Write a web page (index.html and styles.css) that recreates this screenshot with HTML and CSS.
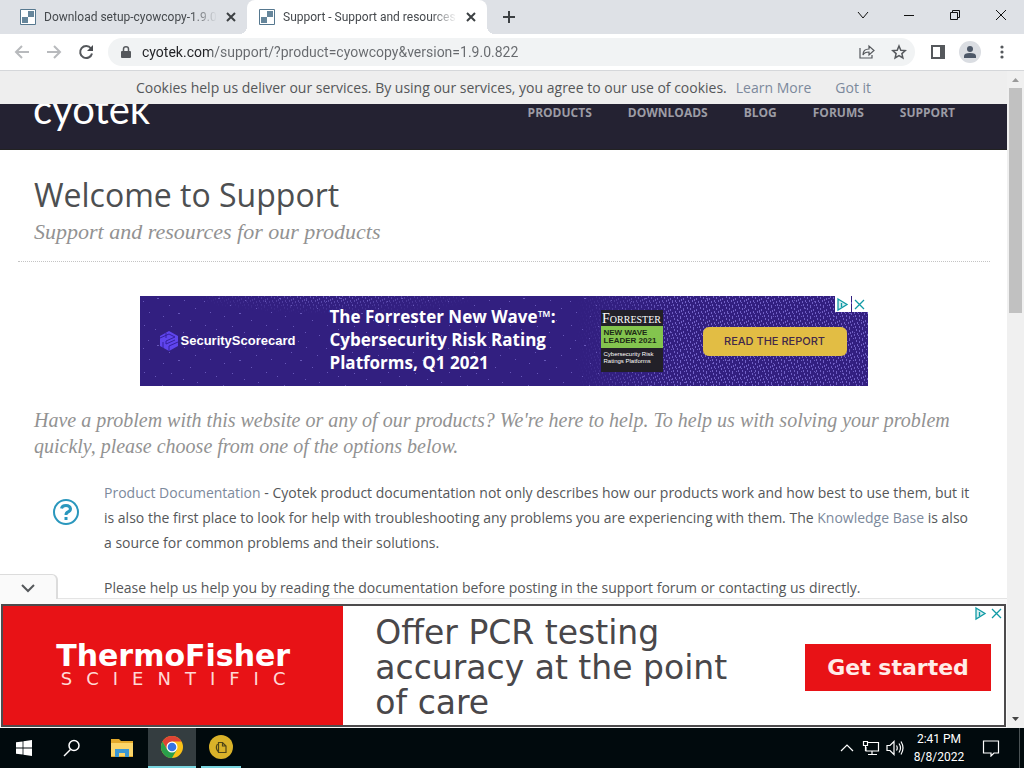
FILE: index.html
```html
<!DOCTYPE html>
<html lang="en">
<head>
<meta charset="utf-8">
<title>Support - Support and resources</title>
<link rel="stylesheet" href="styles.css">
</head>
<body>
<header class="tabstrip">
  <div class="tab">
    <svg class="favicon" viewBox="0 0 16 16"><path fill="#fff" stroke="#56788f" d="M.5.5h15v15H.5z"/><path fill="#66869b" d="M8 2h6v6H8zM2 8h6v6H2z"/></svg>
    <span class="tab-title">Download setup-cyowcopy-1.9.0</span>
    <button class="tab-close" aria-label="Close tab"><svg width="10" height="10" viewBox="0 0 10 10"><path d="M1 1l8 8M9 1L1 9"/></svg></button>
  </div>
  <div class="tab active">
    <svg class="favicon" viewBox="0 0 16 16"><path fill="#fff" stroke="#56788f" d="M.5.5h15v15H.5z"/><path fill="#66869b" d="M8 2h6v6H8zM2 8h6v6H2z"/></svg>
    <span class="tab-title">Support - Support and resources</span>
    <button class="tab-close" aria-label="Close tab"><svg width="10" height="10" viewBox="0 0 10 10"><path d="M1 1l8 8M9 1L1 9"/></svg></button>
  </div>
  <button class="new-tab" aria-label="New tab"><svg width="12" height="12" viewBox="0 0 12 12"><path d="M6 0v12M0 6h12"/></svg></button>
  <div class="window-controls">
    <button aria-label="Search tabs"><svg width="12" height="12" viewBox="0 0 12 12"><path d="M1 3l5 6 5-6"/></svg></button>
    <button aria-label="Minimize"><svg width="12" height="12" viewBox="0 0 12 12"><path d="M1 6.500h10"/></svg></button>
    <button aria-label="Restore"><svg width="12" height="12" viewBox="0 0 12 12"><path d="M1.500 3.500h7v7h-7zM3.500 3.500v-2h7v7h-2"/></svg></button>
    <button aria-label="Close"><svg width="12" height="12" viewBox="0 0 12 12"><path d="M1 1l10 10M11 1L1 11"/></svg></button>
  </div>
</header>

<div class="toolbar">
  <button class="tool faint" aria-label="Back"><svg width="16" height="16" viewBox="0 0 16 16"><path d="M15 8H2M8 2L2 8l6 6"/></svg></button>
  <button class="tool faint" aria-label="Forward"><svg width="16" height="16" viewBox="0 0 16 16"><path d="M1 8h13M8 2l6 6-6 6"/></svg></button>
  <button class="tool" aria-label="Reload"><svg width="16" height="16" viewBox="0 0 16 16"><path stroke-width="2" d="M13 4.500A6 6 0 1 0 14 9.500"/><path stroke="none" fill="#4a4d51" d="M15 1v6H9z"/></svg></button>
  <div class="omnibox">
    <svg class="lock" width="10" height="12" viewBox="0 0 10 12"><path fill="#55585c" d="M1 5h8q1 0 1 1v5q0 1-1 1H1q-1 0-1-1V6q0-1 1-1z"/><path fill="none" stroke="#55585c" stroke-width="1.500" d="M2.500 5V3a2.500 2.200 0 0 1 5 0v2"/></svg>
    <input class="url" type="text" aria-label="Address" value="cyotek.com/support/?product=cyowcopy&amp;version=1.9.0.822">
    <button class="tool" aria-label="Share"><svg width="16" height="16" viewBox="0 0 16 16"><path stroke-width="1.200" d="M1 4v10h12v-3M4 11c0-4 2-6 6-6V2l5 4.500-5 4.500V8C7 8 5 9 4 11z"/></svg></button>
    <button class="tool" aria-label="Bookmark"><svg width="16" height="16" viewBox="0 0 16 16"><path stroke-width="1.500" d="M8 2l1.800 4.200 4.500.4-3.400 3 1 4.400L8 11.700 4.100 14l1-4.400-3.400-3 4.500-.4z"/></svg></button>
  </div>
  <button class="tool" aria-label="Side panel"><svg width="16" height="16" viewBox="0 0 16 16"><path fill="#fff" stroke-width="2" d="M2 2h12v12H2z"/><path stroke="none" fill="#55585c" d="M10 2h4v12h-4z"/></svg></button>
  <button class="tool" aria-label="Profile"><svg width="22" height="22" viewBox="0 0 22 22"><circle cx="11" cy="11" r="11" fill="#dadde2" stroke="none"/><circle cx="11" cy="8" r="3" fill="#4c5767" stroke="none"/><path fill="#4c5767" stroke="none" d="M5 17v-2q0-3 6-3t6 3v2z"/></svg></button>
  <button class="tool" aria-label="Menu"><svg width="4" height="14" viewBox="0 0 4 14"><g fill="#55585c" stroke="none"><circle cx="2" cy="2" r="1.600"/><circle cx="2" cy="7" r="1.600"/><circle cx="2" cy="12" r="1.600"/></g></svg></button>
</div>

<div class="viewport">
  <div class="page">
    <div class="cookies">
      <span>Cookies help us deliver our services. By using our services, you agree to our use of cookies.</span>
      <a class="learn" href="#">Learn More</a>
      <a class="gotit" href="#">Got it</a>
    </div>
    <div class="site-header">
      <a class="logo" href="#">cyotek</a>
      <nav class="site-nav">
        <a href="#">Products</a><a href="#">Downloads</a><a href="#">Blog</a><a href="#">Forums</a><a href="#">Support</a>
      </nav>
    </div>
    <main class="content">
      <div class="heading">
        <h1>Welcome to Support</h1>
        <p class="tagline">Support and resources for our products</p>
      </div>
      <div class="banner">
        <svg class="speckle" width="100%" height="100%" aria-hidden="true">
          <defs>
            <pattern id="sparse" width="61" height="47" patternUnits="userSpaceOnUse"><path fill="#6757b8" d="M3 5h1v1H3zM17 2h2v1h-2zM29 9h1v1h-1zM44 4h1v1h-1zM55 12h1v1h-1zM9 16h1v1H9zM23 20h1v1h-1zM38 17h2v1h-2zM50 24h1v1h-1zM4 29h1v1H4zM15 33h1v1h-1zM31 30h1v1h-1zM43 36h1v1h-1zM57 39h1v1h-1zM22 42h1v1h-1zM8 44h1v1H8zM36 45h1v1h-1z"/></pattern>
            <pattern id="dense" width="13" height="11" patternUnits="userSpaceOnUse"><path fill="#7767cc" d="M1 0h1v2H1zM4 1h1v2H4zM7 0h1v1H7zM10 2h1v2h-1zM2 4h1v2H2zM6 4h1v2H6zM12 5h1v2h-1zM9 6h1v2H9zM0 8h1v2H0zM4 8h1v2H4zM7 9h1v2H7zM11 9h1v1h-1zM3 6h1v1H3zM8 3h1v2H8z"/></pattern>
            <linearGradient id="fade-right"><stop offset=".6" stop-color="#000"/><stop offset=".74" stop-color="#eee"/><stop offset="1" stop-color="#ddd"/></linearGradient>
            <radialGradient id="glow" cx=".27" cy="0" r=".2"><stop offset="0" stop-color="#ccc"/><stop offset="1" stop-color="#000"/></radialGradient>
            <mask id="right-mask"><rect width="100%" height="100%" fill="url(#fade-right)"/></mask>
            <mask id="glow-mask"><rect width="100%" height="100%" fill="url(#glow)"/></mask>
          </defs>
          <rect width="100%" height="100%" fill="url(#sparse)"/>
          <rect width="100%" height="100%" fill="url(#dense)" mask="url(#right-mask)"/>
          <rect width="100%" height="100%" fill="url(#dense)" mask="url(#glow-mask)"/>
        </svg>
        <div class="scorecard">
          <svg width="18" height="20" viewBox="0 0 18 20"><path fill="#5f45ee" d="M9 0l9 5v10l-9 5-9-5V5z"/><path fill="none" stroke="#3520a0" d="M0 7l9-4 6 3-9 4v3l9-4M3 17v-6M9 20v-5l9-4M6 2v5"/></svg>
          <span>SecurityScorecard</span>
        </div>
        <p class="banner-text">The Forrester New Wave™: Cybersecurity Risk Rating Platforms, Q1 2021</p>
        <div class="badge">
          <span class="badge-top">F<small>ORRESTER</small></span>
          <span class="badge-mid">NEW WAVE<br>LEADER 2021</span>
          <span class="badge-low">Cybersecurity Risk<br>Ratings Platforms</span>
        </div>
        <button class="report">READ THE REPORT</button>
        <div class="adchoices">
          <button aria-label="Ad choices"><svg width="15" height="15" viewBox="0 0 15 15"><path fill="#d5eff0" d="M3 2l9 5.500L3 13z"/><path d="M6.500 6v4"/></svg></button>
          <button aria-label="Close ad"><svg width="15" height="15" viewBox="0 0 15 15"><path d="M3 3l9 9M12 3l-9 9"/></svg></button>
        </div>
      </div>
      <p class="lead">Have a problem with this website or any of our products? We're here to help. To help us with solving your problem quickly, please choose from one of the options below.</p>
      <section class="option">
        <svg class="option-icon" width="26" height="26" viewBox="0 0 26 26"><circle cx="13" cy="13" r="12" fill="#fff" stroke="#2a97bd" stroke-width="2"/><path fill="none" stroke="#2a97bd" stroke-width="3" d="M8.500 9.500Q9 6.500 13 6.500t4.500 3.300Q17.500 12 15 13q-2 .8-2 3"/><path fill="#2a97bd" d="M11.500 18h3v3h-3z"/></svg>
        <div>
          <p><a href="#">Product Documentation</a> - Cyotek product documentation not only describes how our products work and how best to use them, but it is also the first place to look for help with troubleshooting any problems you are experiencing with them. The <a href="#">Knowledge Base</a> is also a source for common problems and their solutions.</p>
          <p>Please help us help you by reading the documentation before posting in the support forum or contacting us directly.</p>
        </div>
      </section>
    </main>
    <aside class="anchor">
      <button class="collapse" aria-label="Collapse ad"><svg width="16" height="10" viewBox="0 0 16 10"><path fill="none" stroke="#55585b" stroke-width="2" d="M2 1l6 6 6-6"/></svg></button>
      <div class="thermo">
        <div class="thermo-logo"><strong>ThermoFisher</strong><span>SCIENTIFIC</span></div>
        <p>Offer PCR testing accuracy at the point of care</p>
        <button class="started">Get started</button>
        <div class="adchoices plain">
          <button aria-label="Ad choices"><svg width="15" height="15" viewBox="0 0 15 15"><path fill="#d5eff0" d="M3 2l9 5.500L3 13z"/><path d="M6.500 6v4"/></svg></button>
          <button aria-label="Close ad"><svg width="15" height="15" viewBox="0 0 15 15"><path d="M3 3l9 9M12 3l-9 9"/></svg></button>
        </div>
      </div>
    </aside>
  </div>
  <div class="scrollbar">
    <svg width="7" height="4" viewBox="0 0 7 4"><path fill="#9a9a9a" d="M0 4l3.500-4L7 4z"/></svg>
    <div class="thumb"></div>
    <svg width="7" height="4" viewBox="0 0 7 4"><path fill="#444" d="M0 0l3.500 4L7 0z"/></svg>
  </div>
</div>

<footer class="taskbar">
  <button class="task" aria-label="Start"><svg width="16" height="16" viewBox="0 0 16 16"><path fill="#fff" d="M0 2.300L6.600 1.400v6.200H0zM7.400 1.300L16 0v7.600H7.400zM0 8.400h6.600v6.200L0 13.700zM7.400 8.400H16V16l-8.600-1.300z"/></svg></button>
  <button class="task" aria-label="Search"><svg width="18" height="18" viewBox="0 0 18 18"><circle cx="11" cy="6.500" r="5" fill="none" stroke="#fff" stroke-width="1.500"/><path stroke="#fff" stroke-width="1.500" d="M7.500 10.500L1 17"/></svg></button>
  <button class="task folder" aria-label="File Explorer"><svg width="22" height="20" viewBox="0 0 22 20"><path fill="#e3a92b" d="M0 1h8l2 2h12v16H0z"/><path fill="#fbd569" d="M0 5h22v13H0z"/><path fill="#3b97d3" d="M4 11h14v8h-4v-4H8v4H4z"/></svg></button>
  <button class="task current" aria-label="Chrome"><svg width="24" height="24" viewBox="0 0 24 24"><circle cx="12" cy="12" r="11" fill="#fbc117"/><path fill="#de4335" d="M2.470 6.500A11 11 0 0 1 21.530 6.500H12L7.240 14.750z"/><path fill="#2a9f4b" d="M2.470 6.500A11 11 0 0 0 12 23l4.760-8.250H7.240z"/><circle cx="12" cy="12" r="5.500" fill="#fff"/><circle cx="12" cy="12" r="4.300" fill="#3573e3"/></svg></button>
  <button class="task running" aria-label="Cyotek CopyTools"><svg width="24" height="24" viewBox="0 0 24 24"><circle cx="12" cy="12" r="12" fill="#d9b229"/><path fill="none" stroke="#4e4519" stroke-width="1.200" d="M9.500 7.500h4l3.500 3.500v6.500H9.500zM13.500 7.500V11H17M8.500 9c-2 3-1 6 1 8"/></svg></button>
  <div class="tray">
    <button aria-label="Hidden icons"><svg width="14" height="8" viewBox="0 0 14 8"><path d="M1 7l6-6 6 6"/></svg></button>
    <button aria-label="Network"><svg width="18" height="16" viewBox="0 0 18 16"><path d="M5 2.500h11.500v8.500H4V7M10 11v3.500M6 14.500h9M1.500 1.500h4v4h-4zM3.500 5.500V11"/></svg></button>
    <button aria-label="Volume"><svg width="18" height="16" viewBox="0 0 18 16"><path d="M1 5.500h3l4-4v13l-4-4H1zM10.500 5.500q1.500 2.500 0 5M13 3.500q3 4.500 0 9M15 1.500q4 6.500 0 13"/></svg></button>
    <div class="clock"><time>2:41 PM</time><time>8/8/2022</time></div>
    <button class="notice" aria-label="Notifications"><svg width="18" height="18" viewBox="0 0 18 18"><path d="M1.500 2h15v12H12l-3 3v-3H1.500z"/></svg></button>
  </div>
</footer>
</body>
</html>
```
FILE: styles.css
```css
* { box-sizing: border-box; }
body {
  margin: 0;
  height: 100vh;
  display: flex;
  flex-direction: column;
  overflow: hidden;
  font: 14px/25px "Open Sans", sans-serif;
  color: #555759;
  background: #fff;
}
p, h1 { margin: 0; }
a { color: #7c899c; text-decoration: none; }
button { border: 0; padding: 0; background: none; font: inherit; color: inherit; display: flex; align-items: center; justify-content: center; }
svg { display: block; flex: none; }

.tabstrip { flex: none; height: 34px; display: flex; background: #dee1e6; font: 12px/16px Roboto, sans-serif; }
.tab { width: 240px; display: flex; align-items: center; padding: 0 8px 0 12px; color: #45494d; }
.tab:first-child { margin-left: 8px; width: 239px; }
.tab.active { background: #fff; border-radius: 8px 8px 0 0; position: relative; }
.tab.active::before, .tab.active::after { content: ""; position: absolute; bottom: 0; width: 8px; height: 8px; }
.tab.active::before { right: 100%; background: radial-gradient(circle at 0 0, #dee1e6 8px, #fff 8px); }
.tab.active::after { left: 100%; background: radial-gradient(circle at 100% 0, #dee1e6 8px, #fff 8px); }
.favicon { width: 16px; height: 16px; margin-right: 8px; }
.tab-title { flex: 1; overflow: hidden; white-space: nowrap; -webkit-mask-image: linear-gradient(90deg, #000 85%, transparent); mask-image: linear-gradient(90deg, #000 85%, transparent); }
.tab-close { width: 16px; height: 16px; margin-left: 6px; }
.tab-close svg, .new-tab svg { fill: none; stroke: #3c4043; stroke-width: 2; }
.new-tab { width: 28px; margin-left: 8px; }
.window-controls { margin-left: auto; display: flex; height: 29px; }
.window-controls button { width: 46px; }
.window-controls svg { fill: none; stroke: #111; }

.toolbar { flex: none; height: 37px; display: flex; align-items: center; padding: 0 6px; border-bottom: 1px solid #d5d7da; background: #fff; }
.tool { width: 32px; height: 28px; flex: none; }
.tool svg { fill: none; stroke: #55585c; stroke-width: 2; }
.faint svg { stroke: #b8babd; }
.omnibox { flex: 1; height: 28px; display: flex; align-items: center; margin: 0 7px 0 6px; padding-left: 13px; border-radius: 14px; background: #f1f3f4; }
.url {
  flex: 1; min-width: 0; margin-left: 11px; padding: 0; border: 0; outline: 0;
  font: 14px/20px Roboto, sans-serif;
  color: transparent;
  background: linear-gradient(90deg, #202124 70px, #66696d 70px);
  -webkit-background-clip: text; background-clip: text;
}

.viewport { flex: 1; min-height: 0; display: flex; }
.page { flex: 1; min-width: 0; display: flex; flex-direction: column; position: relative; overflow: hidden; }
.cookies { flex: none; height: 33px; display: flex; align-items: center; justify-content: center; background: #eee; }
.learn { margin-left: 9px; }
.gotit { margin-left: 24px; }
.site-header { flex: none; height: 46px; display: flex; justify-content: space-between; padding: 0 52px 0 33px; overflow: hidden; background: #242232; border-bottom: 1px solid #222; }
.logo { align-self: flex-end; font: 40px/52px Lato, sans-serif; color: #fff; height: 66px; }
.site-nav { display: flex; gap: 36px; font-size: 12px; line-height: 18px; font-weight: 700; text-transform: uppercase; }
.site-nav a { color: #9c9ca5; }

.content { flex: 1; min-height: 0; overflow: hidden; }
.heading { margin: 0 17px 34px 18px; padding: 22px 16px 16px; border-bottom: 1px dotted #c4c4c4; }
h1 { font-size: 32px; line-height: 46px; font-weight: 400; color: #4d4f51; }
.tagline { font: italic 22px/27px "Liberation Serif", serif; color: #929292; }
.banner { width: 728px; height: 90px; margin: 0 auto 21px; display: flex; align-items: center; position: relative; background: #321f80; color: #fff; }
.speckle { position: absolute; inset: 0; }
.scorecard, .banner-text, .badge, .report { position: relative; }
.scorecard { display: flex; align-items: center; gap: 3px; width: 170px; margin-left: 20px; font: bold 13px/16px "Liberation Sans", sans-serif; }
.banner-text { width: 250px; padding-bottom: 3px; font: 700 17px/23px "Open Sans", sans-serif; }
.badge { width: 62px; height: 62px; margin-left: 21px; background: #222028; display: flex; flex-direction: column; }
.badge-top { height: 16px; text-align: center; font: 14px/18px "Liberation Serif", serif; }
.badge-top small { font-size: 10px; }
.badge-mid { height: 22px; padding: 3px 3px 0; font: bold 8px/8px "Liberation Sans", sans-serif; color: #1c2a16; background: #83c44e; white-space: nowrap; }
.badge-low { padding: 3px 3px 0; font: 6px/7px "Liberation Sans", sans-serif; white-space: nowrap; }
.report { width: 144px; height: 29px; margin-left: 40px; border-radius: 6px; background: #e2bd44; color: #41284a; font: 500 11px/16px Inter, sans-serif; }
.adchoices { position: absolute; top: 0; right: 0; display: flex; gap: 1px; }
.adchoices button { background: #fff; }
.adchoices svg { fill: none; stroke: #109aa5; stroke-width: 1.3; }
.adchoices:not(.plain) button { width: 16px; height: 16px; }

.lead { padding: 0 34px; font: italic 20px/26px "Liberation Serif", serif; color: #929292; }
.option { display: flex; align-items: flex-start; padding: 21px 33px 0 53px; }
.option-icon { margin: 19px 25px 0 0; }
.option p { margin-bottom: 20px; }

.anchor { flex: none; position: relative; padding: 5px 1px 1px; border-top: 1px solid #e4e4e4; background: #fafafa; }
.collapse { position: absolute; left: 0; bottom: 100%; width: 58px; height: 25px; padding-top: 4px; border: 1px solid #dcdcdc; border-width: 1px 2px 0 0; border-radius: 0 6px 0 0; background: #fafafa; }
.thermo { height: 123px; display: flex; align-items: center; position: relative; border: 2px solid #4d4b4d; background: #fff; }
.thermo-logo { align-self: stretch; width: 34%; display: flex; flex-direction: column; align-items: center; justify-content: center; background: #e81216; color: #fff; }
.thermo-logo strong { font: bold 30px/26px "DejaVu Sans", sans-serif; }
.thermo-logo span { padding-left: 14px; font: 18px/20px "DejaVu Sans", sans-serif; color: #ffd9d6; letter-spacing: 14px; }
.thermo p { flex: 1; max-width: 370px; margin-left: 32px; padding-top: 4px; font: 33px/35px "DejaVu Sans", sans-serif; color: #49474a; }
.started { width: 186px; height: 47px; margin: 4px 13px 0 auto; background: #e81216; color: #ffece8; font: bold 22px/28px "DejaVu Sans", sans-serif; }

.scrollbar { flex: none; width: 17px; display: flex; flex-direction: column; align-items: center; padding: 7px 0; background: #f0f0f0; }
.thumb { width: 13px; height: 35%; margin: 6px 0 auto; background: #c1c1c1; }

.taskbar { flex: none; height: 40px; display: flex; background: #010a0d; color: #fff; }
.task { width: 48px; }
.folder { width: 52px; }
.current { background: #343d40; border-bottom: 2px solid #79d5df; }
.running { width: 40px; margin-left: 5px; border-bottom: 2px solid #79d5df; }
.tray { margin-left: auto; margin-right: 4px; display: flex; border-right: 1px solid #4b5355; }
.tray button { width: 24px; }
.tray svg { fill: none; stroke: #fff; stroke-width: 1.2; }
.clock { width: 64px; display: flex; flex-direction: column; justify-content: center; text-align: center; font: 12px/18px Roboto, sans-serif; }
.tray .notice { width: 40px; margin-right: 8px; }
```
